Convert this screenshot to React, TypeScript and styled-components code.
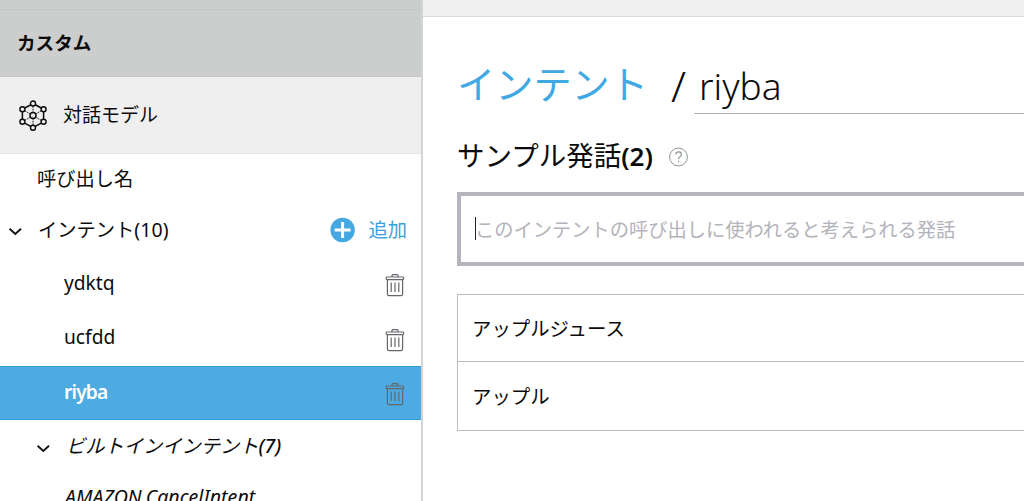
import React from "react";
import styled, { createGlobalStyle } from "styled-components";

const GlobalStyle = createGlobalStyle`
  * { box-sizing: border-box; }
  html, body { margin: 0; overflow: hidden; background: #fff; }
  body { font-family: "Noto Sans CJK JP", sans-serif; font-size: 19.25px; color: #0b0b0c; }
`;

const Page = styled.div`
  display: flex;
  width: 1024px;
  height: 501px;
  overflow: hidden;
`;

const Sidebar = styled.aside`
  width: 423px;
  flex: none;
  height: 501px;
  overflow: hidden;
  border-right: 2px solid #d3d4d5;
`;

const TopStrip = styled.div`
  height: 10px;
  background: #cccecd;
  border-bottom: 1px solid #c3c5c4;
`;

const SectionHeader = styled.div`
  display: flex;
  align-items: center;
  height: 67px;
  padding: 0 0 4px 17px;
  background: #cccecd;
  border-bottom: 1px solid #c3c4c4;
  font-weight: 700;
  font-size: 18.6px;
`;

const ModelRow = styled.div`
  display: flex;
  align-items: center;
  gap: 15px;
  height: 77px;
  padding: 0 0 0 18px;
  background: #efefef;
  border-bottom: 1px solid #e3e4e4;
  font-size: 19px;
  & > span { margin-top: -3px; }
`;

const Row = styled.div<{ $h: number; $indent: number; $active?: boolean; $italic?: boolean }>`
  display: flex;
  align-items: center;
  flex: none;
  height: ${(p) => p.$h}px;
  padding: 0 16px 0 ${(p) => p.$indent}px;
  background: ${(p) => (p.$active ? "#4dabe1" : "transparent")};
  color: ${(p) => (p.$active ? "#fff" : "inherit")};
  border-top: ${(p) => (p.$active ? "1px solid #2f9fd8" : "0")};
  border-bottom: ${(p) => (p.$active ? "1px solid #2f9fd8" : "0")};
  font-style: ${(p) => (p.$italic ? "italic" : "normal")};
  white-space: nowrap;
`;

const Latin = styled.span<{ $size?: number; $weight?: number; $spacing?: number }>`
  font-family: "Noto Sans", "Open Sans", sans-serif;
  font-size: ${(p) => p.$size ?? 19.2}px;
  font-weight: ${(p) => p.$weight ?? 400};
  letter-spacing: ${(p) => p.$spacing ?? 0}px;
`;

const IntentName = styled(Latin)`
  padding-bottom: 4px;
`;

const Label = styled.span`
  padding-bottom: 2px;
`;

const Chevron = styled.svg`
  flex: none;
  width: 14px;
  height: 9px;
  margin: 4px 16px 0 0;
`;

const AddButton = styled.div`
  display: flex;
  align-items: center;
  gap: 13px;
  margin-left: auto;
  margin-right: -2px;
  color: #3d9fdb;
`;

const TrashIcon = styled.svg`
  flex: none;
  width: 20px;
  height: 24px;
  margin: 2px 0 0 auto;
`;

const Main = styled.main`
  flex: 1;
  min-width: 0;
`;

const MainTop = styled.div`
  height: 17px;
  background: #f0f0f0;
  border-bottom: 1px solid #dadbdb;
`;

const Content = styled.div`
  padding-left: 34px;
`;

const Title = styled.div`
  display: flex;
  height: 97px;
  padding-top: 36px;
  line-height: 66px;
  white-space: nowrap;
`;

const Crumb = styled.span`
  width: 214px;
  font-size: 38.2px;
  line-height: 60px;
  color: #40a9e3;
`;

const Slash = styled(Latin)`
  width: 23px;
`;

const NameField = styled.div`
  flex: 1;
  height: 61px;
  padding-left: 5px;
  border-bottom: 1px solid #adb5b3;
`;

const Subtitle = styled.div`
  display: flex;
  align-items: center;
  height: 78px;
  padding-top: 1px;
  font-size: 27.5px;
  white-space: nowrap;
`;

const Help = styled.svg`
  width: 20px;
  height: 20px;
  margin: 6px 0 0 15px;
`;

const Input = styled.div`
  display: flex;
  align-items: center;
  height: 74px;
  padding: 0 0 1px 14px;
  border: 4px solid #b5b5be;
  border-right: 0;
  color: #b3b3bb;
  white-space: nowrap;
`;

const Caret = styled.span`
  width: 1px;
  height: 23px;
  margin-right: -1px;
  background: #222;
`;

const Table = styled.div`
  margin-top: 28px;
  border: 1px solid #bdbdc4;
  border-right: 0;
`;

const TableRow = styled.div`
  display: flex;
  align-items: center;
  height: 66px;
  padding: 0 0 1px 14px;
  font-size: 19.4px;
  & + & {
    height: 69px;
    padding-bottom: 2px;
    border-top: 1px solid #bdbdc4;
  }
`;

const Down = () => (
  <Chevron viewBox="0 0 14 9">
    <path d="M1.6 1.8 L7.3 6.9 L13 1.8" fill="none" stroke="#111" strokeWidth="1.9" />
  </Chevron>
);

const Trash = () => (
  <TrashIcon viewBox="0 0 20 24" fill="none" stroke="#66666d" strokeWidth="1.2">
    <path d="M7 4V2.6Q7 1.6 8 1.6H12Q13 1.6 13 2.6V4" />
    <rect x="1.2" y="4" width="17.4" height="2.6" rx="0.8" />
    <path d="M2.4 6.8V21Q2.4 22.6 4 22.6H16Q17.6 22.6 17.6 21V6.8" />
    <path d="M6.2 9.5V19M10 9.5V19M13.8 9.5V19" />
  </TrashIcon>
);

const nodes = [
  [15, 3.5],
  [25.6, 9.3],
  [25.6, 21.8],
  [15, 27.7],
  [4.4, 21.8],
  [4.4, 9.3],
];

const ModelIcon = () => (
  <svg width="30" height="31" viewBox="0 0 30 31" fill="none" stroke="#0c0c0c">
    <polygon points={nodes.map((n) => n.join(",")).join(" ")} strokeWidth="1.5" />
    {nodes.map(([x, y]) => (
      <path key={`l${x}-${y}`} d={`M15 15.6L${x} ${y}`} strokeWidth="1" strokeDasharray="1.6 1" />
    ))}
    {nodes.map(([x, y]) => (
      <circle key={`c${x}-${y}`} cx={x} cy={y} r="2.5" fill="#efefef" strokeWidth="1.4" />
    ))}
    <circle cx="15" cy="15.6" r="3" fill="#efefef" strokeWidth="1.5" />
  </svg>
);

export default function App() {
  return (
    <Page>
      <GlobalStyle />
      <Sidebar>
        <TopStrip />
        <SectionHeader>カスタム</SectionHeader>
        <ModelRow>
          <ModelIcon />
          <span>対話モデル</span>
        </ModelRow>
        <Row $h={48} $indent={37}>呼び出し名</Row>
        <Row $h={55} $indent={8}>
          <Down />
          <Label>インテント<Latin $size={19.5} $spacing={0.1}>(10)</Latin></Label>
          <AddButton>
            <svg width="26" height="26" viewBox="0 0 26 26">
              <circle cx="12.6" cy="13" r="12.2" fill="#45a8e0" />
              <path d="M12.6 5V21M4.6 13H20.6" stroke="#fff" strokeWidth="3" />
            </svg>
            <Label>追加</Label>
          </AddButton>
        </Row>
        <Row $h={54} $indent={64}><IntentName>ydktq</IntentName><Trash /></Row>
        <Row $h={55} $indent={64}><IntentName>ucfdd</IntentName><Trash /></Row>
        <Row $h={54} $indent={64} $active>
          <IntentName $weight={600} $spacing={-0.8}>riyba</IntentName>
          <Trash />
        </Row>
        <Row $h={52} $indent={36} $italic>
          <Down />
          <Label>ビルトインインテント<Latin $weight={500} $size={19.6}>(7)</Latin></Label>
        </Row>
        <Row $h={52} $indent={65} $italic>
          <IntentName $size={19.6}>AMAZON.CancelIntent</IntentName>
        </Row>
      </Sidebar>
      <Main>
        <MainTop />
        <Content>
          <Title>
            <Crumb>インテント</Crumb>
            <Slash $size={43} $weight={300}>/</Slash>
            <NameField><Latin $size={37} $weight={300}>riyba</Latin></NameField>
          </Title>
          <Subtitle>
            <span>サンプル発話<Latin $size={26} $weight={600}>(2)</Latin></span>
            <Help viewBox="0 0 20 20" fill="none" stroke="#8d9494">
              <circle cx="10.5" cy="10" r="8.9" strokeWidth="1" />
              <path d="M7.8 7.4Q7.9 4.9 10.6 4.9Q13.4 4.9 13.4 7.4Q13.4 8.8 12 9.7Q10.6 10.6 10.6 12.2M10.6 13.7V15.2" strokeWidth="1.2" />
            </Help>
          </Subtitle>
          <Input><Caret />このインテントの呼び出しに使われると考えられる発話</Input>
          <Table>
            <TableRow>アップルジュース</TableRow>
            <TableRow>アップル</TableRow>
          </Table>
        </Content>
      </Main>
    </Page>
  );
}
